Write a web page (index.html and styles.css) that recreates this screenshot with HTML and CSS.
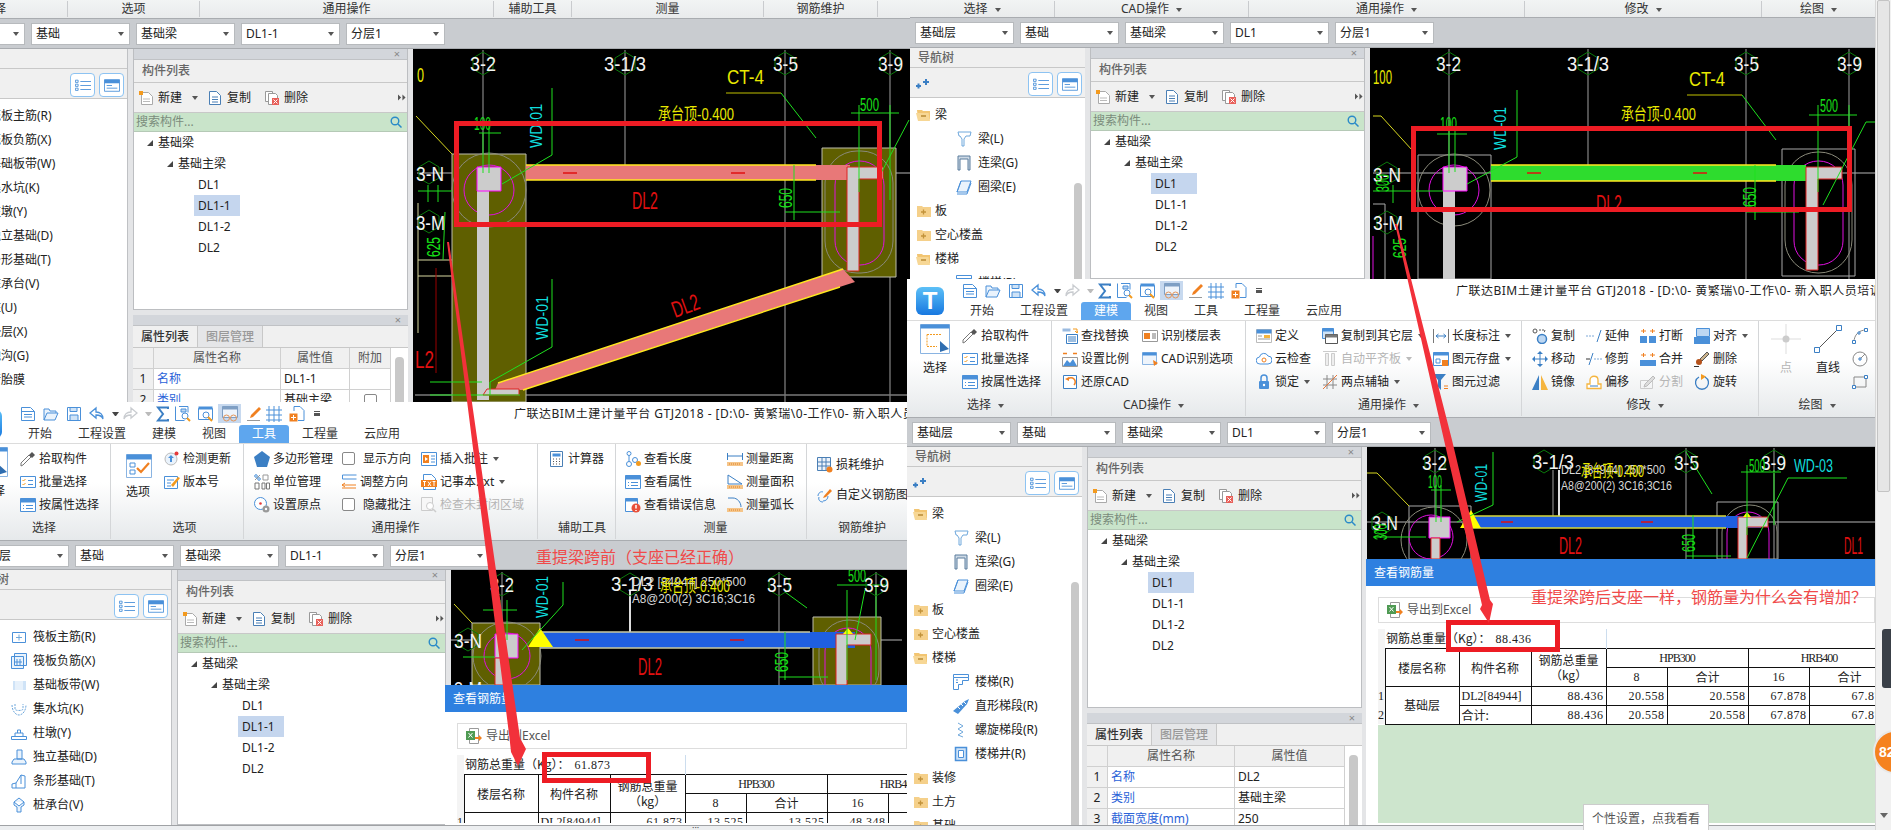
FILE: index.html
```html
<!DOCTYPE html>
<html lang="zh-CN">
<head>
<meta charset="utf-8">
<title>GTJ2018</title>
<link rel="stylesheet" href="styles.css">
</head>
<body>
<svg class="defs" width="0" height="0">
<defs>
<symbol id="new" viewBox="0 0 16 16"><path d="M1.5 1.500h9l4 4v9h-13z" fill="#fff" stroke="#4a90d9"/><path d="M1.500 5.500h13M4 8.500h8M4 11h8" stroke="#4a90d9" fill="none"/></symbol>
<symbol id="open" viewBox="0 0 16 16"><path d="M1 14V3h5l1 2h6v2M1 14l3-7h11l-3 7z" fill="#eaf3fc" stroke="#4a90d9"/></symbol>
<symbol id="save" viewBox="0 0 16 16"><path d="M1.500 1.500h13v13h-13z" fill="#fff" stroke="#4a90d9"/><path d="M4 1.500h7v4H4zM4 14V9h8v5" fill="#cfe3f7" stroke="#4a90d9"/></symbol>
<symbol id="undo" viewBox="0 0 16 16"><path d="M7 2L1 7l6 5V9c3 0 6 1 7 4 0-5-3-7-7-7z" fill="#fff" stroke="#4a90d9" stroke-width="1.300"/></symbol>
<symbol id="redo" viewBox="0 0 16 16"><path d="M9 2l6 5-6 5V9c-3 0-6 1-7 4 0-5 3-7 7-7z" fill="#fff" stroke="#c9ccd0" stroke-width="1.300"/></symbol>
<symbol id="sum" viewBox="0 0 16 16"><path d="M13 3V1.500H3L8 8l-5 6.500h10V13" fill="none" stroke="#3b7fc4" stroke-width="2"/></symbol>
<symbol id="q1" viewBox="0 0 16 16"><path d="M.5.500v14h9M4 .5h9v6" fill="none" stroke="#4a90d9"/><path d="M6 3h5v3H6z" fill="#bdd7f2" stroke="#4a90d9"/><circle cx="10" cy="10" r="3" fill="#fff" stroke="#4a90d9"/><path d="M12 12l3 3" stroke="#f39a1e" stroke-width="2"/></symbol>
<symbol id="q2" viewBox="0 0 16 16"><path d="M.5 2.500h14v11H.5z" fill="#fff" stroke="#4a90d9"/><path d="M.5.500h14v3H.5z" fill="#4a90d9"/><circle cx="8" cy="9" r="3" fill="#fff" stroke="#4a90d9"/><path d="M10 11l4 4" stroke="#f39a1e" stroke-width="2"/></symbol>
<symbol id="hl" viewBox="0 0 16 16"><path d="M.5.500h15v11H.5z" fill="#eef4fb" stroke="#7f9fc4"/><path d="M.5.500h15v3H.5z" fill="#7f9fc4"/><circle cx="4.500" cy="12" r="3" fill="none" stroke="#e2955a"/><circle cx="11.500" cy="12" r="3" fill="none" stroke="#e2955a"/></symbol>
<symbol id="pen" viewBox="0 0 16 16"><path d="M5 9l8-8 2 2-8 8-3 1z" fill="#f08020"/><path d="M1 14.500h13" stroke="#999"/></symbol>
<symbol id="gridi" viewBox="0 0 16 16"><path d="M0 4h16M0 9h16M0 14h16M3 0v16M8 0v16M13 0v16" stroke="#4a90d9" fill="none"/></symbol>
<symbol id="add" viewBox="0 0 16 16"><path d="M5 5V.5h6l4 4v10H9" fill="#fff" stroke="#4a90d9"/><path d="M.5 7.500h8v8h-8z" fill="#f08020"/><path d="M2 11.500h5M4.500 9v5" stroke="#fff"/></symbol>
<symbol id="pick" viewBox="0 0 16 16"><path d="M1 15l2-1 8-8-2-2-8 8z" fill="#fff" stroke="#777"/><path d="M9 4l3-3 3 3-3 3z" fill="#555"/></symbol>
<symbol id="batch" viewBox="0 0 16 16"><path d="M.5 2.500h15v11H.5z" fill="#fff" stroke="#4a90d9"/><path d="M2.500 6l1 1 2-2M2.500 10l1 1 2-2" stroke="#f39a1e" fill="none"/><path d="M8 6.500h5M8 10.500h5" stroke="#4a90d9"/></symbol>
<symbol id="attr" viewBox="0 0 16 16"><path d="M.5 1.500h15v13H.5z" fill="#fff" stroke="#4a90d9"/><path d="M.5 1.500h15v4H.5z" fill="#4a90d9"/><path d="M3 8.500h1M6 8.500h7M3 11.500h1M6 11.500h7" stroke="#4a90d9"/></symbol>
<symbol id="selbig" viewBox="0 0 30 30"><path d="M.5.500h29v29H.5z" fill="#fff" stroke="#8ab4e2"/><path d="M.5.500h29v4H.5z" fill="#4a90d9"/><path d="M7 10.500h14M7 10.500v12h10" fill="none" stroke="#f39a1e" stroke-dasharray="2 1"/><path d="M20 17l9 8-9 3z" fill="#2f6db0"/></symbol>
<symbol id="find" viewBox="0 0 16 16"><path d="M.5.500h8v3h-8z" fill="#9bbbe0"/><path d="M11 1h4v4M13 3l2 2 1-2" stroke="#f39a1e" fill="none"/><path d="M4.500 6.500h11v9h-11z" fill="#fff" stroke="#3b7fc4"/><path d="M6 9h8M6 11h8M6 13h8" stroke="#3b7fc4"/></symbol>
<symbol id="scale" viewBox="0 0 16 16"><path d="M.5 6.500h15v9H.5z" fill="#fff" stroke="#999"/><path d="M1 15l4-6 3 3 3-4 4 7z" fill="#4a90d9"/><path d="M1 2.500h4M11 2.500h4" stroke="#f08020" stroke-width="1.500"/></symbol>
<symbol id="restore" viewBox="0 0 16 16"><path d="M1.500 1.500h13v13h-13z" fill="#fff" stroke="#3b7fc4"/><path d="M12 11A4 4 0 1 0 6 5" fill="none" stroke="#f08020" stroke-width="1.500"/><path d="M3 5l4-2v4z" fill="#f08020"/></symbol>
<symbol id="floor" viewBox="0 0 16 16"><path d="M.5 2.500h15v11H.5z" fill="#fff" stroke="#999"/><path d="M2 5h6v6H2z" fill="#f08020"/><path d="M10 6h4M10 8h4M10 10h4" stroke="#777"/></symbol>
<symbol id="cadopt" viewBox="0 0 16 16"><path d="M.5 1.500h14v12H.5z" fill="#eef4fb" stroke="#8ab4e2"/><path d="M.5 1.500h14v3H.5z" fill="#4a90d9"/><path d="M11 9l5 3-4 3z" fill="#f08020"/></symbol>
<symbol id="def" viewBox="0 0 16 16"><path d="M.5 1.500h15v13H.5z" fill="#fff" stroke="#bbb"/><path d="M.5 1.500h15v4H.5z" fill="#4a90d9"/><path d="M8 7h6v3H8z" fill="#f5b53f"/><path d="M2 8h4M2 11h12" stroke="#999"/></symbol>
<symbol id="cloud" viewBox="0 0 16 16"><path d="M4 13a3.500 3.500 0 0 1-.5-7A4.500 4.500 0 0 1 12 5a3.500 3.500 0 0 1 0 8z" fill="#fff" stroke="#4a90d9"/><circle cx="8" cy="9" r="2" fill="none" stroke="#f08020"/></symbol>
<symbol id="lock" viewBox="0 0 16 16"><path d="M5 7V4a3 3 0 0 1 6 0v3" fill="none" stroke="#4a90d9" stroke-width="1.500"/><rect x="3" y="7" width="10" height="8" rx="1" fill="#4a90d9"/><circle cx="8" cy="11" r="1.200" fill="#fff"/></symbol>
<symbol id="copyto" viewBox="0 0 16 16"><path d="M.5.500h11v10H.5z" fill="#cfe3f7" stroke="#4a90d9"/><path d="M.5.500h11v3H.5z" fill="#4a90d9"/><path d="M3.500 6.500h12v9h-12z" fill="#fff" stroke="#555"/><path d="M3.500 6.500h12v3h-12z" fill="#777"/></symbol>
<symbol id="autoal" viewBox="0 0 16 16"><path d="M1 .5h14M3.500 2.500h3v12h-3zM9.500 2.500h3v12h-3z" fill="#eee" stroke="#ccc"/></symbol>
<symbol id="twopt" viewBox="0 0 16 16"><path d="M5 1v14M11 1v14M1 5h14M1 11h14" stroke="#888" fill="none"/><path d="M1 15L15 1" stroke="#e8763a"/></symbol>
<symbol id="lenm" viewBox="0 0 16 16"><path d="M.5 1v14M15.500 1v14" stroke="#777"/><path d="M3 8h10M3 8l2.500-2M3 8l2.500 2M13 8l-2.500-2M13 8l-2.500 2" stroke="#3b7fc4" fill="none"/></symbol>
<symbol id="save2" viewBox="0 0 16 16"><path d="M.5 1.500h15v13H.5z" fill="#fff" stroke="#4a90d9"/><path d="M.5 1.500h15v3H.5z" fill="#4a90d9"/><path d="M3 8h4v4H3z" fill="none" stroke="#4a90d9"/><path d="M9 9h6v6H9z" fill="#f08020"/></symbol>
<symbol id="filt" viewBox="0 0 16 16"><path d="M0 0h13L8 6v10L5 13V6z" fill="#3b7fc4"/><path d="M11 12h4M11 14.500h4" stroke="#f08020"/></symbol>
<symbol id="copy2" viewBox="0 0 16 16"><circle cx="3" cy="3" r="2" fill="#fff" stroke="#555"/><circle cx="10" cy="11" r="4.500" fill="#bdd7f2" stroke="#3b7fc4" stroke-width="1.500"/><path d="M7 2h6l-1 3" stroke="#555" fill="none" stroke-dasharray="2 1"/></symbol>
<symbol id="move" viewBox="0 0 16 16"><path d="M8 3v10M3 8h10" stroke="#3b7fc4"/><path d="M8 0l3 3H5zM8 16l3-3H5zM0 8l3-3v6zM16 8l-3-3v6z" fill="#3b7fc4"/></symbol>
<symbol id="mirror" viewBox="0 0 16 16"><path d="M7 1v15H0z" fill="#3b7fc4"/><path d="M9 1v15h7z" fill="#f5b53f"/></symbol>
<symbol id="ext" viewBox="0 0 16 16"><path d="M0 8h9" stroke="#7fa9d8" stroke-dasharray="2 1"/><path d="M11 14l4-12" stroke="#3b7fc4"/></symbol>
<symbol id="trim" viewBox="0 0 16 16"><path d="M0 8h4" stroke="#333"/><path d="M8 8h8" stroke="#7fa9d8" stroke-dasharray="2 1"/><path d="M3 14L7 2" stroke="#3b7fc4"/></symbol>
<symbol id="offs" viewBox="0 0 16 16"><path d="M1 14.500V10h3V6c0-5 8-5 8 0v4h3v4.500z" fill="#fff" stroke="#f5b53f" stroke-width="1.300"/><path d="M4 12h8" stroke="#3b7fc4"/></symbol>
<symbol id="brk" viewBox="0 0 16 16"><path d="M0 8h7v7H0zM9 8h7v7H9z" fill="#4a90d9"/><path d="M1 3h5M3.500 1v4M10 3h5M12.500 1v4" stroke="#f08020"/></symbol>
<symbol id="mrg" viewBox="0 0 16 16"><path d="M0 9h16v6H0z" fill="#4a90d9"/><path d="M1 4h5M3.500 2v4M10 4h5M12.500 2v4" stroke="#f08020"/></symbol>
<symbol id="splt" viewBox="0 0 16 16"><path d="M.5 6.500h12v8H.5z" fill="none" stroke="#ccc"/><path d="M5 10l8-8 2 2-8 8-3 1z" fill="#ddd" stroke="#bbb"/></symbol>
<symbol id="alg" viewBox="0 0 16 16"><path d="M2.500.5h13v8h-13z" fill="#bdd7f2" stroke="#4a90d9"/><path d="M0 9h16v7H0z" fill="#4a90d9"/></symbol>
<symbol id="era" viewBox="0 0 16 16"><path d="M6 8l7-7 2 2-7 7z" fill="#c9b18a" stroke="#555"/><circle cx="5" cy="11" r="3" fill="#b5521b"/><path d="M0 15.500h5" stroke="#333"/></symbol>
<symbol id="rot" viewBox="0 0 16 16"><path d="M11 3A6.500 6.500 0 1 1 5 3" fill="none" stroke="#3b7fc4" stroke-width="1.300"/><path d="M7 0l5 2.500L7 6z" fill="#f39a1e"/></symbol>
<symbol id="pt" viewBox="0 0 30 30"><path d="M15 0v30M0 15h30" stroke="#ddd"/><circle cx="15" cy="15" r="3.500" fill="#ccc"/></symbol>
<symbol id="ln" viewBox="0 0 30 30"><path d="M4 26L26 4" stroke="#555"/><path d="M1.500 23.500h5v5h-5zM23.500 1.500h5v5h-5z" fill="#fff" stroke="#3b7fc4"/></symbol>
<symbol id="arc" viewBox="0 0 16 16"><path d="M2 14C2 7 7 2 14 2" fill="none" stroke="#888"/><path d="M.5 12.500h3v3h-3zM12.500.500h3v3h-3zM6 4h2v2H6z" fill="#fff" stroke="#3b7fc4"/></symbol>
<symbol id="circ" viewBox="0 0 16 16"><circle cx="8" cy="8" r="7" fill="none" stroke="#888"/><path d="M7 7h2v2H7z" fill="#fff" stroke="#3b7fc4"/><path d="M9 7l4-4" stroke="#888"/></symbol>
<symbol id="rct" viewBox="0 0 16 16"><path d="M2 3h12v10H2z" fill="none" stroke="#888"/><path d="M.5 11.500h3v3h-3zM12.500 1.500h3v3h-3z" fill="#fff" stroke="#3b7fc4"/></symbol>
<symbol id="optbig" viewBox="0 0 26 24"><path d="M.5.500h25v23H.5z" fill="#fff" stroke="#8ab4e2"/><path d="M.5.500h25v5H.5z" fill="#4a90d9"/><path d="M4 9h5v4H4zM4 16h5v4H4z" fill="none" stroke="#4a90d9"/><path d="M11 14l4 4 8-9" stroke="#f08020" stroke-width="2.200" fill="none"/></symbol>
<symbol id="upd" viewBox="0 0 16 16"><circle cx="7" cy="8" r="6" fill="#eaf3fc" stroke="#bbb"/><path d="M7 4l3 3H8v4H6V7H4z" fill="#4a90d9"/><circle cx="12.500" cy="2.500" r="2" fill="#e63a3a"/></symbol>
<symbol id="ver" viewBox="0 0 16 16"><path d="M.5 2.500h13v12H.5z" fill="#fff" stroke="#4a90d9"/><path d="M3 6h7M3 9h4M3 12h4" stroke="#4a90d9"/><path d="M7 11l7-8 2 1-7 9z" fill="#f39a1e"/></symbol>
<symbol id="poly" viewBox="0 0 16 16"><path d="M8 0l8 6-3 10H3L0 6z" fill="#3b7fc4"/></symbol>
<symbol id="unit" viewBox="0 0 16 16"><path d="M1 6l5-5" stroke="#999"/><circle cx="2" cy="2" r="1.300" fill="none" stroke="#4a90d9"/><circle cx="5" cy="5" r="1.300" fill="none" stroke="#4a90d9"/><path d="M9 1h5v5H9z" fill="none" stroke="#999"/><path d="M1 9h4v6H1zM8 9h3v6H8zM12.500 9h3v6h-3z" fill="none" stroke="#777"/></symbol>
<symbol id="orig" viewBox="0 0 16 16"><circle cx="6.500" cy="6.500" r="6" fill="#fff" stroke="#4a90d9"/><circle cx="6.500" cy="6.500" r="1.300" fill="#e63a3a"/><circle cx="12" cy="12" r="3.500" fill="#999"/><circle cx="12" cy="12" r="1.200" fill="#fff"/></symbol>
<symbol id="dir" viewBox="0 0 16 16"><path d="M15.500 5H1.500V1h14" fill="none" stroke="#4a90d9"/><path d="M1 11h14M1 11l3-2M1 11l3 2M1 14h14" stroke="#f08020" fill="none"/></symbol>
<symbol id="note" viewBox="0 0 16 16"><path d="M.5 1.500h15v13H.5z" fill="#fff" stroke="#4a90d9"/><path d="M2 4h6v8H2z" fill="#f08020"/><path d="M4 6l3 2-3 2z" fill="#fff"/><path d="M10 5h4M10 8h4M10 11h4" stroke="#4a90d9"/></symbol>
<symbol id="txt" viewBox="0 0 16 16"><path d="M2.500.5h8l4 4v11h-12z" fill="#fff" stroke="#4a90d9"/><path d="M0 6h16v7H0z" fill="#f08020"/><path d="M2 7.500h3M3.500 7.500V12M7 7.500l3 4.500M10 7.500L7 12M11.500 7.500h3M13 7.500V12" stroke="#fff"/></symbol>
<symbol id="chk" viewBox="0 0 16 16"><path d="M.5.500h11v13H.5z" fill="#f7f7f7" stroke="#ccc"/><circle cx="9" cy="9" r="3.500" fill="#fff" stroke="#ccc"/><path d="M12 12l3 3" stroke="#ccc" stroke-width="1.500"/></symbol>
<symbol id="calc" viewBox="0 0 16 16"><path d="M1.500.5h12v15h-12z" fill="#fff" stroke="#4a7fb5"/><path d="M3.500 2.500h8v3h-8z" fill="#4a90d9"/><path d="M4 8h1M7 8h1M10 8h1M4 10.500h1M7 10.500h1M10 10.500h1M4 13h1M7 13h1M10 13h1" stroke="#555"/></symbol>
<symbol id="vlen" viewBox="0 0 16 16"><path d="M4 3v10" stroke="#4a90d9"/><circle cx="4" cy="2.500" r="2" fill="#fff" stroke="#4a90d9"/><circle cx="4" cy="13" r="2.500" fill="#fff" stroke="#4a90d9"/><circle cx="10" cy="9" r="2.500" fill="#fff" stroke="#4a90d9"/><circle cx="13.500" cy="12.500" r="2.500" fill="#f39a1e"/></symbol>
<symbol id="verr" viewBox="0 0 16 16"><path d="M.5 1.500h12v13H.5z" fill="#fff" stroke="#4a90d9"/><path d="M.5 1.500h12v3H.5z" fill="#4a90d9"/><circle cx="11" cy="11" r="4.500" fill="#e8503a"/><path d="M11 8v3.500M11 13v1" stroke="#fff" stroke-width="1.500"/></symbol>
<symbol id="mdis" viewBox="0 0 16 16"><path d="M.5 2v7M15.500 2v7M1 5h14" stroke="#3b7fc4"/><path d="M0 11h16v4H0z" fill="#f5c58a"/><path d="M2 13h12" stroke="#e08020" stroke-dasharray="1 1"/></symbol>
<symbol id="mare" viewBox="0 0 16 16"><path d="M1 1v9h14z" fill="#fff" stroke="#3b7fc4"/><path d="M0 11h16v4H0z" fill="#f5c58a"/><path d="M2 13h12" stroke="#e08020" stroke-dasharray="1 1"/></symbol>
<symbol id="marc" viewBox="0 0 16 16"><path d="M1 1h5c4 0 8 4 8 9" fill="none" stroke="#3b7fc4"/><path d="M0 11h16v4H0z" fill="#f5c58a"/><path d="M2 13h12" stroke="#e08020" stroke-dasharray="1 1"/></symbol>
<symbol id="loss" viewBox="0 0 16 16"><path d="M.5.500h13v13H.5zM.5 5h13M.5 9h13M5 .5v13M9 .5v13" fill="#eef4fb" stroke="#4a7fb5"/><circle cx="12.500" cy="12.500" r="3" fill="#f08020"/></symbol>
<symbol id="rebar" viewBox="0 0 16 16"><path d="M1 9c0-3 3-5 5-4M6 15c-3 0-5-2-4-5M11 9c0 3-2 5-5 5" fill="none" stroke="#4a90d9"/><path d="M7 9l6-7 2 2-6 6-3 1z" fill="#f08020"/></symbol>
<symbol id="lst" viewBox="0 0 18 14"><path d="M.5 1h3v2.500h-3zM.5 5.500h3V8h-3zM.5 10h3v2.500h-3z" fill="none" stroke="#4a90d9"/><path d="M6 2.500h12M6 7h12M6 11.500h12" stroke="#4a90d9"/></symbol>
<symbol id="crd" viewBox="0 0 18 14"><path d="M.5.500h17v13H.5z" fill="#fff" stroke="#4a90d9"/><path d="M.5.500h17v4H.5z" fill="#4a90d9"/><path d="M3 7h6M3 10h12" stroke="#4a90d9"/></symbol>
<symbol id="sr" viewBox="0 0 12 12"><circle cx="5" cy="5" r="3.800" fill="none" stroke="#2a8ac8" stroke-width="1.400"/><path d="M8 8l3.500 3.500" stroke="#2a8ac8" stroke-width="1.500"/></symbol>
<symbol id="mr" viewBox="0 0 9 7"><path d="M0 0l3.500 3.500L0 7zM5 0l3.500 3.500L5 7z" fill="#555"/></symbol>
<symbol id="star" viewBox="0 0 14 12"><path d="M0 8h5M2.500 5.500v5M7 4h6M10 1v6" stroke="#3b7fc4" stroke-width="2"/></symbol>
<symbol id="pnew" viewBox="0 0 14 14"><path d="M2.500 1.500h7l4 4v8h-11z" fill="#fff" stroke="#aaa"/><path d="M4 8h7M4 10.500h7" stroke="#bbb"/><path d="M0 0h4v4H0z" fill="#f39a1e"/></symbol>
<symbol id="pcopy" viewBox="0 0 14 14"><path d="M1.500.5h7l4 4v9h-11z" fill="#fff" stroke="#4a7fb5"/><path d="M4 6h6M4 8.500h6M4 11h6" stroke="#4a7fb5"/></symbol>
<symbol id="pdel" viewBox="0 0 14 14"><path d="M.5.500h7v10h-7z" fill="#fff" stroke="#999"/><path d="M3.500 2.500h7l2 2v9h-9z" fill="#fff" stroke="#999"/><path d="M7 7h7v7H7z" fill="#e8605a"/><path d="M8.500 8.500l4 4M12.500 8.500l-4 4" stroke="#fff"/></symbol>
<symbol id="fo" viewBox="0 0 16 12"><path d="M1 1h5l1 1h7v8.500H2z" fill="#f2c572"/><path d="M0 4h12.500l1.500 8H2z" fill="#f7d795"/><path d="M5 7h5" stroke="#b98a35" stroke-width="1.500"/></symbol>
<symbol id="fc" viewBox="0 0 16 12"><path d="M1 1h5l1 1h8v10H1z" fill="#f5d08a"/><path d="M5 7h5M7.500 4.500v5" stroke="#c2923a" stroke-width="1.300"/></symbol>
<symbol id="ni1" viewBox="0 0 16 16"><path d="M1.500 3.500h13v10h-13z" fill="none" stroke="#4a90d9"/><path d="M8 5.500v6M5 8.500h6" stroke="#6fa8dc"/></symbol>
<symbol id="ni2" viewBox="0 0 16 16"><path d="M3.500.5h12v12h-12zM.5 3.500h12v12H.5z" fill="#eaf3fc" stroke="#4a90d9"/><path d="M3 9h8M6 6v7M9 6v7" stroke="#4a90d9"/></symbol>
<symbol id="ni3" viewBox="0 0 16 16"><path d="M2 4h13v9H2z" fill="#cfe3f7"/><path d="M5 4v9M11 4v9M7 4v9M9 4v9" stroke="#fff"/></symbol>
<symbol id="ni4" viewBox="0 0 16 16"><path d="M1 4c0 5 3 10 7 10s7-5 7-10M4 3v5c0 2 8 2 8 0V3" fill="none" stroke="#6fa8dc" stroke-dasharray="2 1"/></symbol>
<symbol id="ni5" viewBox="0 0 16 16"><path d="M.5 11.500h15v3H.5zM4 11V8h8v3M6.500 8V5h3v3" fill="#fff" stroke="#4a90d9"/></symbol>
<symbol id="ni6" viewBox="0 0 16 16"><path d="M6 1h5v9H6zM3 10h10l2 3v2H1v-2z" fill="#eaf3fc" stroke="#4a90d9"/></symbol>
<symbol id="ni7" viewBox="0 0 16 16"><path d="M1 15v-4l4-1 5-8 4 1v12z" fill="#fff" stroke="#4a90d9"/><path d="M10 2v9M5 10v5" stroke="#4a90d9"/></symbol>
<symbol id="ni8" viewBox="0 0 16 16"><path d="M8 1l5 4-5 4-5-4zM3 5v3l3 2v5h4v-5l3-2V5" fill="#eaf3fc" stroke="#4a90d9"/></symbol>
<symbol id="ni9" viewBox="0 0 16 16"><path d="M2 1h13l-1 4h-4l-2 3v7H6V8L4 5H3z" fill="#fff" stroke="#6fa8dc"/></symbol>
<symbol id="ni10" viewBox="0 0 16 16"><path d="M2 15V1h12v14h-2V4H4v11z" fill="#cdd9e5" stroke="#5b7c9d"/></symbol>
<symbol id="ni11" viewBox="0 0 16 16"><path d="M5 2h10l-4 11H1zM5 2L1 13" fill="#eaf3fc" stroke="#4a90d9"/><path d="M1 15h10l4-11" fill="none" stroke="#4a90d9"/></symbol>
<symbol id="ni12" viewBox="0 0 16 16"><path d="M.5.500h15v3H.5zM.5 3.500v12h5v-5h4v-4h6V3.500" fill="#fff" stroke="#4a90d9"/><path d="M3 6h2M3 8.500h2" stroke="#4a90d9"/></symbol>
<symbol id="ni13" viewBox="0 0 16 16"><path d="M0 13L12 3l4-2-2 5-9 10z" fill="#4a90d9"/><path d="M5 9l2 2M8 6l2 2M11 4l2 2" stroke="#fff"/></symbol>
<symbol id="ni14" viewBox="0 0 16 16"><path d="M5 1l5 3-5 3 5 3-5 3 5 2" fill="none" stroke="#6fa8dc"/></symbol>
<symbol id="ni15" viewBox="0 0 16 16"><path d="M2.500 1.500h11v13h-11z" fill="#cfe3f7" stroke="#4a90d9" stroke-width="1.500"/><path d="M5.500 4.500h5v7h-5z" fill="#fff" stroke="#4a90d9"/></symbol>
<symbol id="xl" viewBox="0 0 16 16"><path d="M3.500.5h9v15h-9z" fill="#fff" stroke="#9a9a9a"/><path d="M0 3h9v9H0z" fill="#4f9a53"/><path d="M2.500 5l4 4.500M6.500 5l-4 4.500" stroke="#fff"/><path d="M9 9h4V7l3 3-3 3v-2H9z" fill="#f08020"/></symbol>
</defs>
</svg>

<!-- Top-left window -->
<section class="win win-a">
  <div class="labelbar labels-a">
    <span class="lb la1">选择</span><span class="lb la2">选项</span><span class="lb la3">通用操作</span><span class="lb la4">辅助工具</span><span class="lb la5">测量</span><span class="lb la6">钢筋维护</span>
  </div>
  <div class="toolbar toolbar-tall">
    <div class="combo"><span>基础层</span><i class="car"></i></div><div class="combo"><span>基础</span><i class="car"></i></div><div class="combo"><span>基础梁</span><i class="car"></i></div><div class="combo"><span>DL1-1</span><i class="car"></i></div><div class="combo"><span>分层1</span><i class="car"></i></div>
  </div>
  <div class="body">
    <aside class="nav nav-wide">
      <div class="nav-title">导航树</div>
      <div class="nav-btns"><span class="vbtn"><svg class="vi"><use href="#lst"/></svg></span><span class="vbtn"><svg class="vi"><use href="#crd"/></svg></span></div>
      <ul class="nav-tree">
        <li class="ni ni-sub"><svg class="ic"><use href="#ni1"/></svg>筏板主筋(R)</li>
        <li class="ni ni-sub"><svg class="ic"><use href="#ni2"/></svg>筏板负筋(X)</li>
        <li class="ni ni-sub"><svg class="ic"><use href="#ni3"/></svg>基础板带(W)</li>
        <li class="ni ni-sub"><svg class="ic"><use href="#ni4"/></svg>集水坑(K)</li>
        <li class="ni ni-sub"><svg class="ic"><use href="#ni5"/></svg>柱墩(Y)</li>
        <li class="ni ni-sub"><svg class="ic"><use href="#ni6"/></svg>独立基础(D)</li>
        <li class="ni ni-sub"><svg class="ic"><use href="#ni7"/></svg>条形基础(T)</li>
        <li class="ni ni-sub"><svg class="ic"><use href="#ni8"/></svg>桩承台(V)</li>
        <li class="ni ni-sub"><svg class="ic"><use href="#ni8"/></svg>桩(U)</li>
        <li class="ni ni-sub"><svg class="ic"><use href="#ni3"/></svg>垫层(X)</li>
        <li class="ni ni-sub"><svg class="ic"><use href="#ni4"/></svg>地沟(G)</li>
        <li class="ni ni-sub"><svg class="ic"><use href="#ni1"/></svg>砖胎膜</li>
      </ul>
    </aside>
    <div class="list">
      <div class="list-top">
        <div class="phead">×</div>
        <div class="ptitle">构件列表</div>
        <div class="ptool"><span class="pb pb-new"><svg class="pi"><use href="#pnew"/></svg>新建<i class="car car-s"></i></span><span class="pb pb-copy"><svg class="pi"><use href="#pcopy"/></svg>复制</span><span class="pb pb-del"><svg class="pi"><use href="#pdel"/></svg>删除</span><svg class="more"><use href="#mr"/></svg></div>
        <div class="psearch"><span>搜索构件...</span><svg class="si"><use href="#sr"/></svg></div>
        <ul class="ptree"><li class="t1">基础梁</li><li class="t2">基础主梁</li><li class="t3"><span>DL1</span></li><li class="t3"><span class="sel">DL1-1</span></li><li class="t3"><span>DL1-2</span></li><li class="t3"><span>DL2</span></li></ul>
      </div>
      <div class="prop">
        <div class="phead">×</div>
        <div class="ptabs"><span class="ptab on">属性列表</span><span class="ptab">图层管理</span></div>
        <div class="pgrid with-add">
          <span class="pth"></span><span class="pth">属性名称</span><span class="pth">属性值</span><span class="pth">附加</span><span class="pscroll"><b></b></span>
          <span class="pn">1</span><span class="pk">名称</span><span class="pv">DL1-1</span><span class="pv"></span>
          <span class="pn">2</span><span class="pk">类别</span><span class="pv">基础主梁</span><span class="pv pc"><i class="cb cb-s"></i></span>
        </div>
      </div>
    </div>
    <div class="cad">
      <svg class="draw" width="497" height="353" viewBox="413 49 497 353">
        <g class="gl"><path d="M483 50V400M625 50V173M785 50V402M890 50V402M417 173H910M415 395H910"/></g>
        <text class="y" x="417" y="82" lengthAdjust="spacingAndGlyphs" textLength="7">0</text>
        <path d="M416 116L452 154" class="yl"/><path d="M418 203V333M418 260H452M418 276H452" class="yl2"/>
        <path d="M436 268V373" stroke="#900" fill="none"/>
        <path d="M452 154h74v248h-74zM822 148h74v129h-74z" class="olive"/>
        <circle cx="489" cy="190" r="37" class="ring"/><rect x="825" y="151" width="68" height="122" rx="32" class="ring"/>
        <circle cx="489" cy="190" r="25" class="mag"/><rect x="835" y="161" width="49" height="104" rx="24" class="mag"/>
        <path d="M526 165H850V180H526z" fill="#e87878"/><path d="M526 165H816M526 180H816" class="yl3"/>
        <path d="M498 383L843 269L855 282L523 390H495z" fill="#e87878"/><path d="M498 383L843 269M523 390L840 287" class="yl3"/>
        <path d="M563 173H577M731 173H745" stroke="#e01010" stroke-width="1.500" fill="none"/>
        <path d="M477 167h12v233h-12z" fill="#ccc"/><path d="M477 167h24v24h-24z" fill="#ccc" stroke="#f0f"/>
        <path d="M483 395h36v-6h-32z" fill="#ccc" stroke="#d22"/>
        <path d="M847 167h36v12h-24v92h-12z" fill="#ccc" stroke="#d22"/>
        <g class="gn"><path d="M479 133H501M489 120V173M483 133V173M418 191H452M428 185V202M438 185V202M552 88V155L502 184M552 279V347L490 382M851 113H899M859 105V192M890 105V200M794 165V220M785 212H840M781 93L816 138M880 175L909 120M490 382V395M430 382H482M430 395H520M445 212L443 260"/></g>
        <path d="M726 93H781" stroke="#808000" stroke-width="1.500"/>
        <g class="hex"><path d="M483 52l10 6v11l-10 6-10-6V58zM625 52l10 6v11l-10 6-10-6V58zM785 52l10 6v11l-10 6-10-6V58zM890 52l10 6v11l-10 6-10-6V58zM429 161l10 6v11l-10 6-10-6v-11zM429 210l10 6v11l-10 6-10-6v-11z"/></g>
        <g class="w"><text x="470" y="71" lengthAdjust="spacingAndGlyphs" textLength="26">3-2</text><text x="604" y="71" lengthAdjust="spacingAndGlyphs" textLength="42">3-1/3</text><text x="773" y="71" lengthAdjust="spacingAndGlyphs" textLength="25">3-5</text><text x="878" y="71" lengthAdjust="spacingAndGlyphs" textLength="25">3-9</text><text x="416" y="181" lengthAdjust="spacingAndGlyphs" textLength="28">3-N</text><text x="416" y="230" lengthAdjust="spacingAndGlyphs" textLength="29">3-M</text></g>
        <text class="y" x="727" y="84" lengthAdjust="spacingAndGlyphs" textLength="37">CT-4</text>
        <text class="y ysm" x="658" y="120" lengthAdjust="spacingAndGlyphs" textLength="76">承台顶-0.400</text>
        <text class="g" x="860" y="111" lengthAdjust="spacingAndGlyphs" textLength="19">500</text><text class="g" x="474" y="130" lengthAdjust="spacingAndGlyphs" textLength="17">100</text>
        <text class="g" transform="translate(440 257) rotate(-90)" lengthAdjust="spacingAndGlyphs" textLength="20">625</text>
        <text class="g" transform="translate(792 208) rotate(-90)" lengthAdjust="spacingAndGlyphs" textLength="20">650</text>
        <text class="c" transform="translate(542 148) rotate(-90)" lengthAdjust="spacingAndGlyphs" textLength="44">WD-01</text>
        <text class="c" transform="translate(548 340) rotate(-90)" lengthAdjust="spacingAndGlyphs" textLength="44">WD-01</text>
        <text class="r" x="632" y="209" lengthAdjust="spacingAndGlyphs" textLength="26">DL2</text><text class="r" transform="translate(675 318) rotate(-20)" lengthAdjust="spacingAndGlyphs" textLength="28">DL2</text><text class="r" x="415" y="368" lengthAdjust="spacingAndGlyphs" textLength="19">L2</text>
      </svg>
    </div>
  </div>
</section>

<!-- Top-right window -->
<section class="win win-b">
  <div class="labelbar labels-b">
    <span class="lb lb1">选择 <i class="car"></i></span><span class="lb lb2">CAD操作 <i class="car"></i></span><span class="lb lb3">通用操作 <i class="car"></i></span><span class="lb lb4">修改 <i class="car"></i></span><span class="lb lb5">绘图 <i class="car"></i></span>
  </div>
  <div class="toolbar toolbar-tall">
    <div class="combo"><span>基础层</span><i class="car"></i></div><div class="combo"><span>基础</span><i class="car"></i></div><div class="combo"><span>基础梁</span><i class="car"></i></div><div class="combo"><span>DL1</span><i class="car"></i></div><div class="combo"><span>分层1</span><i class="car"></i></div>
  </div>
  <div class="body">
    <aside class="nav">
      <div class="nav-title">导航树</div>
      <div class="nav-btns nav-btns-star"><svg class="stari"><use href="#star"/></svg><span class="vbtn"><svg class="vi"><use href="#lst"/></svg></span><span class="vbtn"><svg class="vi"><use href="#crd"/></svg></span></div>
      <ul class="nav-tree">
        <li class="ni"><svg class="fd"><use href="#fo"/></svg>梁</li>
        <li class="ni ni-sub"><svg class="ic"><use href="#ni9"/></svg>梁(L)</li>
        <li class="ni ni-sub"><svg class="ic"><use href="#ni10"/></svg>连梁(G)</li>
        <li class="ni ni-sub"><svg class="ic"><use href="#ni11"/></svg>圈梁(E)</li>
        <li class="ni"><svg class="fd"><use href="#fc"/></svg>板</li>
        <li class="ni"><svg class="fd"><use href="#fc"/></svg>空心楼盖</li>
        <li class="ni"><svg class="fd"><use href="#fo"/></svg>楼梯</li>
        <li class="ni ni-sub"><svg class="ic"><use href="#ni12"/></svg>楼梯(R)</li>
      </ul>
      <span class="nav-thumb"></span>
    </aside>
    <div class="list">
      <div class="list-top">
        <div class="phead">×</div>
        <div class="ptitle">构件列表</div>
        <div class="ptool"><span class="pb pb-new"><svg class="pi"><use href="#pnew"/></svg>新建<i class="car car-s"></i></span><span class="pb pb-copy"><svg class="pi"><use href="#pcopy"/></svg>复制</span><span class="pb pb-del"><svg class="pi"><use href="#pdel"/></svg>删除</span><svg class="more"><use href="#mr"/></svg></div>
        <div class="psearch"><span>搜索构件...</span><svg class="si"><use href="#sr"/></svg></div>
        <ul class="ptree"><li class="t1">基础梁</li><li class="t2">基础主梁</li><li class="t3"><span class="sel">DL1</span></li><li class="t3"><span>DL1-1</span></li><li class="t3"><span>DL1-2</span></li><li class="t3"><span>DL2</span></li></ul>
      </div>
    </div>
    <div class="cad">
      <svg class="draw" width="506" height="232" viewBox="1369 48 506 232">
        <g class="gl"><path d="M1448 49V279M1587 49V173M1745 49V279M1848 49V279M1372 173H1875"/></g>
        <text class="y" x="1372" y="84" lengthAdjust="spacingAndGlyphs" textLength="19">100</text>
        <path d="M1372 116H1380L1411 150" class="yl"/><path d="M1372 204H1384V279" class="wl"/>
        <path d="M1372 236V279" stroke="#e010e0" fill="none"/>
        <path d="M1417 155h73v124h-73zM1781 149h73v127h-73z" class="box"/>
        <circle cx="1453" cy="190" r="36" class="ring"/><rect x="1784" y="152" width="67" height="121" rx="33" class="ring"/>
        <circle cx="1453" cy="190" r="25" class="mag"/><rect x="1793" y="161" width="49" height="104" rx="24" class="mag"/>
        <path d="M1490 165H1805V181H1490z" fill="#2edc2e"/><path d="M1490 165H1775M1490 181H1775" class="yl3"/>
        <path d="M1526 173H1540M1692 173H1706" stroke="#e01010" stroke-width="1.500" fill="none"/>
        <path d="M1442 167h12v112h-12z" fill="#ccc"/><path d="M1442 167h24v24h-24z" fill="#ccc" stroke="#f0f"/>
        <path d="M1805 167h36v12h-24v91h-12z" fill="#ccc" stroke="#d22"/>
        <g class="gn"><path d="M1436 134H1466M1448 120V173M1454 130V172M1372 191H1442M1392 185V203M1516 90V157L1466 184M1808 115H1856M1817 105V192M1848 105V200M1754 165V220M1745 212H1798M1741 95L1775 140M1822 205L1865 122H1875"/></g>
        <path d="M1686 95H1741" stroke="#808000" stroke-width="1.500"/>
        <g class="hex"><path d="M1448 52l10 6v11l-10 6-10-6V58zM1587 52l10 6v11l-10 6-10-6V58zM1745 52l10 6v11l-10 6-10-6V58zM1848 52l10 6v11l-10 6-10-6V58zM1386 162l10 6v11l-10 6-10-6v-11zM1386 211l10 6v11l-10 6-10-6v-11z"/></g>
        <g class="w"><text x="1435" y="71" lengthAdjust="spacingAndGlyphs" textLength="25">3-2</text><text x="1566" y="71" lengthAdjust="spacingAndGlyphs" textLength="42">3-1/3</text><text x="1733" y="71" lengthAdjust="spacingAndGlyphs" textLength="25">3-5</text><text x="1836" y="71" lengthAdjust="spacingAndGlyphs" textLength="25">3-9</text><text x="1372" y="182" lengthAdjust="spacingAndGlyphs" textLength="28">3-N</text><text x="1372" y="230" lengthAdjust="spacingAndGlyphs" textLength="30">3-M</text></g>
        <text class="y" x="1688" y="86" lengthAdjust="spacingAndGlyphs" textLength="36">CT-4</text>
        <text class="y ysm" x="1620" y="120" lengthAdjust="spacingAndGlyphs" textLength="75">承台顶-0.400</text>
        <text class="g" x="1819" y="112" lengthAdjust="spacingAndGlyphs" textLength="18">500</text><text class="g" x="1439" y="130" lengthAdjust="spacingAndGlyphs" textLength="17">100</text>
        <text class="g" transform="translate(1388 192) rotate(-90)" lengthAdjust="spacingAndGlyphs" textLength="18">300</text>
        <text class="g" transform="translate(1405 258) rotate(-90)" lengthAdjust="spacingAndGlyphs" textLength="20">625</text>
        <text class="g" transform="translate(1755 207) rotate(-90)" lengthAdjust="spacingAndGlyphs" textLength="20">650</text>
        <text class="c" transform="translate(1505 150) rotate(-90)" lengthAdjust="spacingAndGlyphs" textLength="43">WD-01</text>
        <text class="r" x="1595" y="212" lengthAdjust="spacingAndGlyphs" textLength="26">DL2</text>
      </svg>
    </div>
  </div>
</section>

<!-- Bottom-left window -->
<section class="win win-c">
  <header class="rhead">
    <div class="logo"><b>T</b></div>
    <div class="qat">
      <div class="qat-i"><svg class="q"><use href="#new"/></svg><svg class="q"><use href="#open"/></svg><svg class="q"><use href="#save"/></svg><svg class="q"><use href="#undo"/></svg><i class="car qc"></i><svg class="q"><use href="#redo"/></svg><i class="car qc off-c"></i><svg class="q q-n"><use href="#sum"/></svg><svg class="q"><use href="#q1"/></svg><svg class="q q-n"><use href="#q2"/></svg><span class="q-hl"><svg class="ic"><use href="#hl"/></svg></span><svg class="q q-n"><use href="#pen"/></svg><svg class="q"><use href="#gridi"/></svg><svg class="q"><use href="#add"/></svg><span class="q-more"></span></div>
      <div class="title">广联达BIM土建计量平台 GTJ2018 - [D:\0- 黄繁瑞\0-工作\0- 新入职人员培训</div>
    </div>
    <nav class="tabs"><span class="tab">开始</span><span class="tab">工程设置</span><span class="tab">建模</span><span class="tab">视图</span><span class="tab on">工具</span><span class="tab">工程量</span><span class="tab">云应用</span></nav>
  </header>
  <div class="ribbon">
    <div class="grp g-sel"><div class="rows"><div class="big"><svg class="bi"><use href="#selbig"/></svg><span>选择</span></div><div class="col"><div class="ri"><svg class="ic"><use href="#pick"/></svg>拾取构件</div><div class="ri"><svg class="ic"><use href="#batch"/></svg>批量选择</div><div class="ri"><svg class="ic"><use href="#attr"/></svg>按属性选择</div></div></div><div class="rlabel">选择</div></div>
    <div class="grp gc-opt"><div class="rows"><div class="big big-o"><svg class="bi-o"><use href="#optbig"/></svg><span>选项</span></div><div class="col"><div class="ri"><svg class="ic"><use href="#upd"/></svg>检测更新</div><div class="ri"><svg class="ic"><use href="#ver"/></svg>版本号</div></div></div><div class="rlabel">选项</div></div>
    <div class="grp gc-com"><div class="rows"><div class="col"><div class="ri"><svg class="ic"><use href="#poly"/></svg>多边形管理</div><div class="ri"><svg class="ic"><use href="#unit"/></svg>单位管理</div><div class="ri"><svg class="ic"><use href="#orig"/></svg>设置原点</div></div><div class="col"><div class="ri"><i class="cb"></i>显示方向</div><div class="ri"><svg class="ic"><use href="#dir"/></svg>调整方向</div><div class="ri"><i class="cb"></i>隐藏批注</div></div><div class="col"><div class="ri"><svg class="ic"><use href="#note"/></svg>插入批注 <i class="car"></i></div><div class="ri"><svg class="ic"><use href="#txt"/></svg>记事本.txt <i class="car"></i></div><div class="ri off"><svg class="ic"><use href="#chk"/></svg>检查未封闭区域</div></div></div><div class="rlabel">通用操作</div></div>
    <div class="grp gc-aux"><div class="rows"><div class="col"><div class="ri"><svg class="ic"><use href="#calc"/></svg>计算器</div></div></div><div class="rlabel">辅助工具</div></div>
    <div class="grp gc-mea"><div class="rows"><div class="col"><div class="ri"><svg class="ic"><use href="#vlen"/></svg>查看长度</div><div class="ri"><svg class="ic"><use href="#attr"/></svg>查看属性</div><div class="ri"><svg class="ic"><use href="#verr"/></svg>查看错误信息</div></div><div class="col"><div class="ri"><svg class="ic"><use href="#mdis"/></svg>测量距离</div><div class="ri"><svg class="ic"><use href="#mare"/></svg>测量面积</div><div class="ri"><svg class="ic"><use href="#marc"/></svg>测量弧长</div></div></div><div class="rlabel">测量</div></div>
    <div class="grp gc-reb"><div class="rows"><div class="col col-wide"><div class="ri"><svg class="ic"><use href="#loss"/></svg>损耗维护</div><div class="ri"><svg class="ic"><use href="#rebar"/></svg>自定义钢筋图</div></div></div><div class="rlabel">钢筋维护</div></div>
  </div>
  <div class="toolbar">
    <div class="combo"><span>基础层</span><i class="car"></i></div><div class="combo"><span>基础</span><i class="car"></i></div><div class="combo"><span>基础梁</span><i class="car"></i></div><div class="combo"><span>DL1-1</span><i class="car"></i></div><div class="combo"><span>分层1</span><i class="car"></i></div>
  </div>
  <div class="body">
    <aside class="nav nav-wide">
      <div class="nav-title">导航树</div>
      <div class="nav-btns"><span class="vbtn"><svg class="vi"><use href="#lst"/></svg></span><span class="vbtn"><svg class="vi"><use href="#crd"/></svg></span></div>
      <ul class="nav-tree">
        <li class="ni ni-sub"><svg class="ic"><use href="#ni1"/></svg>筏板主筋(R)</li>
        <li class="ni ni-sub"><svg class="ic"><use href="#ni2"/></svg>筏板负筋(X)</li>
        <li class="ni ni-sub"><svg class="ic"><use href="#ni3"/></svg>基础板带(W)</li>
        <li class="ni ni-sub"><svg class="ic"><use href="#ni4"/></svg>集水坑(K)</li>
        <li class="ni ni-sub"><svg class="ic"><use href="#ni5"/></svg>柱墩(Y)</li>
        <li class="ni ni-sub"><svg class="ic"><use href="#ni6"/></svg>独立基础(D)</li>
        <li class="ni ni-sub"><svg class="ic"><use href="#ni7"/></svg>条形基础(T)</li>
        <li class="ni ni-sub"><svg class="ic"><use href="#ni8"/></svg>桩承台(V)</li>
      </ul>
    </aside>
    <div class="list">
      <div class="list-top">
        <div class="phead">×</div>
        <div class="ptitle">构件列表</div>
        <div class="ptool"><span class="pb pb-new"><svg class="pi"><use href="#pnew"/></svg>新建<i class="car car-s"></i></span><span class="pb pb-copy"><svg class="pi"><use href="#pcopy"/></svg>复制</span><span class="pb pb-del"><svg class="pi"><use href="#pdel"/></svg>删除</span><svg class="more"><use href="#mr"/></svg></div>
        <div class="psearch"><span>搜索构件...</span><svg class="si"><use href="#sr"/></svg></div>
        <ul class="ptree"><li class="t1">基础梁</li><li class="t2">基础主梁</li><li class="t3"><span>DL1</span></li><li class="t3"><span class="sel">DL1-1</span></li><li class="t3"><span>DL1-2</span></li><li class="t3"><span>DL2</span></li></ul>
      </div>
    </div>
    <div class="cad">
      <svg class="draw" width="451" height="116" viewBox="456 570 451 116">
        <g class="gl"><path d="M507 572V640M635 590V640M784 572V685M881 572V685M456 640H907"/></g>
        <path d="M635 590V632" stroke="#ddd" stroke-width="2"/>
        <path d="M459 604L477 623" class="yl"/>
        <path d="M477 623h68v62h-68zM818 617h68v68h-68z" class="olive"/>
        <circle cx="512" cy="656" r="34" class="ring"/><rect x="824" y="620" width="60" height="80" rx="30" class="ring"/>
        <circle cx="512" cy="656" r="23" class="mag"/><rect x="830" y="628" width="46" height="80" rx="23" class="mag"/>
        <path d="M545 632H860V648H545z" fill="#1f5fe0"/><path d="M545 632H815M545 648H815" stroke="#c9c9a0" stroke-width="1.500"/>
        <path d="M580 640H594M735 640H749" stroke="#e01010" stroke-width="1.500" fill="none"/>
        <path d="M500 634h23v24h-23z" fill="#ccc" stroke="#f0f"/><path d="M500 658h11v27h-11z" fill="#ccc" stroke="#d22"/>
        <path d="M841 634h35v11h-24v40h-11z" fill="#ccc" stroke="#d22"/>
        <path d="M545 628L558 647H533z" fill="#ff0"/><path d="M853 628l5 6h-10z" fill="#ff0"/>
        <g class="gn"><path d="M488 610H522M505 600V640M512 600V640M468 657H500M568 582V605L527 650M852 590V680M842 585H890M881 585V680M870 590L860 640M790 632V680M784 677H833M790 592L812 608"/></g>
        <g class="hex"><path d="M507 573l10 6v11l-10 6-10-6v-11zM635 573l10 6v11l-10 6-10-6v-11zM784 573l10 6v11l-10 6-10-6v-11zM881 573l10 6v11l-10 6-10-6v-11zM473 628l10 6v11l-10 6-10-6v-11z"/></g>
        <g class="w"><text x="495" y="592" lengthAdjust="spacingAndGlyphs" textLength="24">3-2</text><text x="616" y="591" lengthAdjust="spacingAndGlyphs" textLength="42">3-1/3</text><text x="772" y="592" lengthAdjust="spacingAndGlyphs" textLength="25">3-5</text><text x="869" y="592" lengthAdjust="spacingAndGlyphs" textLength="25">3-9</text><text x="459" y="648" lengthAdjust="spacingAndGlyphs" textLength="28">3-N</text><text x="459" y="696" lengthAdjust="spacingAndGlyphs" textLength="28">3-M</text></g>
        <text class="wsm" x="637" y="586" lengthAdjust="spacingAndGlyphs" textLength="114">DL2 [84944] 250*500</text>
        <text class="y ysm" x="665" y="592" lengthAdjust="spacingAndGlyphs" textLength="70">承台顶-0.400</text>
        <text class="wsm" x="637" y="603" lengthAdjust="spacingAndGlyphs" textLength="123">A8@200(2) 3C16;3C16</text>
        <text class="g" x="853" y="582" lengthAdjust="spacingAndGlyphs" textLength="18">500</text>
        <text class="g" transform="translate(793 672) rotate(-90)" lengthAdjust="spacingAndGlyphs" textLength="20">650</text>
        <text class="c" transform="translate(553 618) rotate(-90)" lengthAdjust="spacingAndGlyphs" textLength="42">WD-01</text>
        <text class="r" x="643" y="675" lengthAdjust="spacingAndGlyphs" textLength="24">DL2</text>
      </svg>
    </div>
  </div>
  <div class="dlg dlg-c">
    <div class="dlg-title">查看钢筋量</div>
    <div class="dlg-body">
      <div class="export"><span class="exbtn"><svg class="ic"><use href="#xl"/></svg>导出到Excel</span></div>
      <div class="sheet">
        <table class="rtable">
          <colgroup><col class="c0"><col class="c1"><col class="c2"><col class="c3"><col class="c4"><col class="c5"><col class="c6"><col class="c7"></colgroup>
          <tr><td class="rn"></td><td colspan="3" class="tot"><span class="zh">钢筋总重量（Kg）：</span><span class="val">61.873</span></td><td colspan="4" class="totr"></td></tr>
          <tr><td class="rn"></td><th rowspan="2">楼层名称</th><th rowspan="2">构件名称</th><th rowspan="2">钢筋总重量<br>（kg）</th><th colspan="2" class="latin">HPB300</th><th colspan="2" class="latin">HRB400</th></tr>
          <tr><td class="rn"></td><th class="num-h">8</th><th>合计</th><th class="num-h">16</th><th>合计</th></tr>
          <tr><td class="rn">1</td><td rowspan="2" class="ctr zh">基础层</td><td>DL2[84944]</td><td class="num">61.873</td><td class="num">13.525</td><td class="num">13.525</td><td class="num">48.348</td><td class="num">48.348</td></tr>
          <tr><td class="rn">2</td><td class="zh">合计:</td><td class="num">61.873</td><td class="num">13.525</td><td class="num">13.525</td><td class="num">48.348</td><td class="num">48.348</td></tr>
        </table>
      </div>
    </div>
  </div>
</section>

<!-- Bottom-right window -->
<section class="win win-d">
  <header class="rhead">
    <div class="logo"><b>T</b></div>
    <div class="qat">
      <div class="qat-i"><svg class="q"><use href="#new"/></svg><svg class="q"><use href="#open"/></svg><svg class="q"><use href="#save"/></svg><svg class="q"><use href="#undo"/></svg><i class="car qc"></i><svg class="q"><use href="#redo"/></svg><i class="car qc off-c"></i><svg class="q q-n"><use href="#sum"/></svg><svg class="q"><use href="#q1"/></svg><svg class="q q-n"><use href="#q2"/></svg><span class="q-hl"><svg class="ic"><use href="#hl"/></svg></span><svg class="q q-n"><use href="#pen"/></svg><svg class="q"><use href="#gridi"/></svg><svg class="q"><use href="#add"/></svg><span class="q-more"></span></div>
      <div class="title">广联达BIM土建计量平台 GTJ2018 - [D:\0- 黄繁瑞\0-工作\0- 新入职人员培训</div>
    </div>
    <nav class="tabs"><span class="tab">开始</span><span class="tab">工程设置</span><span class="tab on">建模</span><span class="tab">视图</span><span class="tab">工具</span><span class="tab">工程量</span><span class="tab">云应用</span></nav>
  </header>
  <div class="ribbon">
    <div class="grp g-sel g-sel-d"><div class="rows"><div class="big"><svg class="bi"><use href="#selbig"/></svg><span>选择</span></div><div class="col"><div class="ri"><svg class="ic"><use href="#pick"/></svg>拾取构件</div><div class="ri"><svg class="ic"><use href="#batch"/></svg>批量选择</div><div class="ri"><svg class="ic"><use href="#attr"/></svg>按属性选择</div></div></div><div class="rlabel">选择 <i class="car"></i></div></div>
    <div class="grp gd-cad"><div class="rows"><div class="col"><div class="ri"><svg class="ic"><use href="#find"/></svg>查找替换</div><div class="ri"><svg class="ic"><use href="#scale"/></svg>设置比例</div><div class="ri"><svg class="ic"><use href="#restore"/></svg>还原CAD</div></div><div class="col"><div class="ri"><svg class="ic"><use href="#floor"/></svg>识别楼层表</div><div class="ri"><svg class="ic"><use href="#cadopt"/></svg>CAD识别选项</div></div></div><div class="rlabel">CAD操作 <i class="car"></i></div></div>
    <div class="grp gd-com"><div class="rows"><div class="col"><div class="ri"><svg class="ic"><use href="#def"/></svg>定义</div><div class="ri"><svg class="ic"><use href="#cloud"/></svg>云检查</div><div class="ri"><svg class="ic"><use href="#lock"/></svg>锁定 <i class="car"></i></div></div><div class="col"><div class="ri"><svg class="ic"><use href="#copyto"/></svg>复制到其它层 <i class="car"></i></div><div class="ri off"><svg class="ic"><use href="#autoal"/></svg>自动平齐板 <i class="car car-off"></i></div><div class="ri"><svg class="ic"><use href="#twopt"/></svg>两点辅轴 <i class="car"></i></div></div><div class="col"><div class="ri"><svg class="ic"><use href="#lenm"/></svg>长度标注 <i class="car"></i></div><div class="ri"><svg class="ic"><use href="#save2"/></svg>图元存盘 <i class="car"></i></div><div class="ri"><svg class="ic"><use href="#filt"/></svg>图元过滤</div></div></div><div class="rlabel">通用操作 <i class="car"></i></div></div>
    <div class="grp gd-mod"><div class="rows"><div class="col"><div class="ri"><svg class="ic"><use href="#copy2"/></svg>复制</div><div class="ri"><svg class="ic"><use href="#move"/></svg>移动</div><div class="ri"><svg class="ic"><use href="#mirror"/></svg>镜像</div></div><div class="col"><div class="ri"><svg class="ic"><use href="#ext"/></svg>延伸</div><div class="ri"><svg class="ic"><use href="#trim"/></svg>修剪</div><div class="ri"><svg class="ic"><use href="#offs"/></svg>偏移</div></div><div class="col"><div class="ri"><svg class="ic"><use href="#brk"/></svg>打断</div><div class="ri"><svg class="ic"><use href="#mrg"/></svg>合并</div><div class="ri off"><svg class="ic"><use href="#splt"/></svg>分割</div></div><div class="col"><div class="ri"><svg class="ic"><use href="#alg"/></svg>对齐 <i class="car"></i></div><div class="ri"><svg class="ic"><use href="#era"/></svg>删除</div><div class="ri"><svg class="ic"><use href="#rot"/></svg>旋转</div></div></div><div class="rlabel">修改 <i class="car"></i></div></div>
    <div class="grp gd-drw"><div class="rows"><div class="big off"><svg class="bi"><use href="#pt"/></svg><span>点</span></div><div class="big"><svg class="bi"><use href="#ln"/></svg><span>直线</span></div><div class="col"><div class="ri"><svg class="ic"><use href="#arc"/></svg></div><div class="ri"><svg class="ic"><use href="#circ"/></svg></div><div class="ri"><svg class="ic"><use href="#rct"/></svg></div></div></div><div class="rlabel">绘图 <i class="car"></i></div></div>
  </div>
  <div class="toolbar">
    <div class="combo"><span>基础层</span><i class="car"></i></div><div class="combo"><span>基础</span><i class="car"></i></div><div class="combo"><span>基础梁</span><i class="car"></i></div><div class="combo"><span>DL1</span><i class="car"></i></div><div class="combo"><span>分层1</span><i class="car"></i></div>
  </div>
  <div class="body">
    <aside class="nav">
      <div class="nav-title">导航树</div>
      <div class="nav-btns nav-btns-star"><svg class="stari"><use href="#star"/></svg><span class="vbtn"><svg class="vi"><use href="#lst"/></svg></span><span class="vbtn"><svg class="vi"><use href="#crd"/></svg></span></div>
      <ul class="nav-tree">
        <li class="ni"><svg class="fd"><use href="#fo"/></svg>梁</li>
        <li class="ni ni-sub"><svg class="ic"><use href="#ni9"/></svg>梁(L)</li>
        <li class="ni ni-sub"><svg class="ic"><use href="#ni10"/></svg>连梁(G)</li>
        <li class="ni ni-sub"><svg class="ic"><use href="#ni11"/></svg>圈梁(E)</li>
        <li class="ni"><svg class="fd"><use href="#fc"/></svg>板</li>
        <li class="ni"><svg class="fd"><use href="#fc"/></svg>空心楼盖</li>
        <li class="ni"><svg class="fd"><use href="#fo"/></svg>楼梯</li>
        <li class="ni ni-sub"><svg class="ic"><use href="#ni12"/></svg>楼梯(R)</li>
        <li class="ni ni-sub"><svg class="ic"><use href="#ni13"/></svg>直形梯段(R)</li>
        <li class="ni ni-sub"><svg class="ic"><use href="#ni14"/></svg>螺旋梯段(R)</li>
        <li class="ni ni-sub"><svg class="ic"><use href="#ni15"/></svg>楼梯井(R)</li>
        <li class="ni"><svg class="fd"><use href="#fc"/></svg>装修</li>
        <li class="ni"><svg class="fd"><use href="#fc"/></svg>土方</li>
        <li class="ni"><svg class="fd"><use href="#fc"/></svg>基础</li>
      </ul>
      <span class="nav-thumb"></span>
    </aside>
    <div class="list">
      <div class="list-top">
        <div class="phead">×</div>
        <div class="ptitle">构件列表</div>
        <div class="ptool"><span class="pb pb-new"><svg class="pi"><use href="#pnew"/></svg>新建<i class="car car-s"></i></span><span class="pb pb-copy"><svg class="pi"><use href="#pcopy"/></svg>复制</span><span class="pb pb-del"><svg class="pi"><use href="#pdel"/></svg>删除</span><svg class="more"><use href="#mr"/></svg></div>
        <div class="psearch"><span>搜索构件...</span><svg class="si"><use href="#sr"/></svg></div>
        <ul class="ptree"><li class="t1">基础梁</li><li class="t2">基础主梁</li><li class="t3"><span class="sel">DL1</span></li><li class="t3"><span>DL1-1</span></li><li class="t3"><span>DL1-2</span></li><li class="t3"><span>DL2</span></li></ul>
      </div>
      <div class="prop">
        <div class="phead">×</div>
        <div class="ptabs"><span class="ptab on">属性列表</span><span class="ptab">图层管理</span></div>
        <div class="pgrid">
          <span class="pth"></span><span class="pth">属性名称</span><span class="pth">属性值</span><span class="pscroll"><b></b></span>
          <span class="pn">1</span><span class="pk">名称</span><span class="pv">DL2</span>
          <span class="pn">2</span><span class="pk">类别</span><span class="pv">基础主梁</span>
          <span class="pn">3</span><span class="pk">截面宽度(mm)</span><span class="pv">250</span>
        </div>
      </div>
    </div>
    <div class="cad">
      <svg class="draw" width="509" height="113" viewBox="1366 447 509 113">
        <g class="gl"><path d="M1434 448V522M1552 470V522M1685 448V559M1773 448V559M1366 522H1875"/></g>
        <path d="M1558 470V516" stroke="#ddd" stroke-width="2"/>
        <path d="M1366 473H1376L1408 506" class="yl"/>
        <path d="M1408 506h62v53h-62zM1716 502h61v57h-61z" class="box"/>
        <circle cx="1433" cy="540" r="33" class="ring"/><rect x="1721" y="505" width="55" height="90" rx="27" class="ring"/>
        <circle cx="1430" cy="537" r="22" class="mag"/><rect x="1726" y="512" width="42" height="80" rx="21" class="mag"/>
        <path d="M1470 516H1760V528H1470z" fill="#1f5fe0"/><path d="M1470 516H1725M1470 528H1725" stroke="#d8d838" stroke-width="1.500"/>
        <path d="M1500 522H1512M1640 522H1652" stroke="#e01010" stroke-width="1.500" fill="none"/>
        <path d="M1428 517h21v21h-21z" fill="#ccc" stroke="#f0f"/><path d="M1430 538h9v21h-9z" fill="#ccc" stroke="#d22"/>
        <path d="M1737 517h30v10h-21v32h-9z" fill="#ccc" stroke="#d22"/>
        <path d="M1470 510L1480 528H1459z" fill="#ff0"/><path d="M1746 512l4 5h-8z" fill="#ff0"/>
        <g class="gn"><path d="M1430 490H1450M1435 485V522M1440 485V522M1372 537H1425M1492 452V505L1456 522M1740 472H1780M1746 465V535M1773 470V525M1787 478L1746 558M1787 478H1846M1692 515V565M1685 556H1730M1685 452L1711 494"/></g>
        <g class="hex"><path d="M1434 450l10 6v11l-10 6-10-6v-11zM1543 450l10 6v11l-10 6-10-6v-11zM1685 450l10 6v11l-10 6-10-6v-11zM1773 450l10 6v11l-10 6-10-6v-11zM1381 512l10 6v11l-10 6-10-6v-11z"/></g>
        <g class="w"><text x="1421" y="470" lengthAdjust="spacingAndGlyphs" textLength="25">3-2</text><text x="1531" y="469" lengthAdjust="spacingAndGlyphs" textLength="42">3-1/3</text><text x="1673" y="470" lengthAdjust="spacingAndGlyphs" textLength="25">3-5</text><text x="1760" y="470" lengthAdjust="spacingAndGlyphs" textLength="25">3-9</text><text x="1371" y="530" lengthAdjust="spacingAndGlyphs" textLength="26">3-N</text></g>
        <text class="wsm" x="1560" y="474" lengthAdjust="spacingAndGlyphs" textLength="104">DL2 [84944] 250*500</text>
        <text class="y ysm" x="1580" y="477" lengthAdjust="spacingAndGlyphs" textLength="63">承台顶-0.400</text>
        <text class="wsm" x="1560" y="490" lengthAdjust="spacingAndGlyphs" textLength="111">A8@200(2) 3C16;3C16</text>
        <text class="g" x="1748" y="472" lengthAdjust="spacingAndGlyphs" textLength="16">500</text><text class="g" x="1427" y="488" lengthAdjust="spacingAndGlyphs" textLength="14">100</text>
        <text class="g" transform="translate(1386 540) rotate(-90)" lengthAdjust="spacingAndGlyphs" textLength="16">300</text>
        <text class="g" transform="translate(1694 552) rotate(-90)" lengthAdjust="spacingAndGlyphs" textLength="18">650</text>
        <text class="c" transform="translate(1486 502) rotate(-90)" lengthAdjust="spacingAndGlyphs" textLength="38">WD-01</text>
        <text class="cl" x="1793" y="472" lengthAdjust="spacingAndGlyphs" textLength="39">WD-03</text>
        <text class="r" x="1558" y="554" lengthAdjust="spacingAndGlyphs" textLength="23">DL2</text><text class="r" x="1843" y="554" lengthAdjust="spacingAndGlyphs" textLength="19">DL1</text>
      </svg>
    </div>
  </div>
  <div class="dlg dlg-d">
    <div class="dlg-title">查看钢筋量</div>
    <div class="dlg-body">
      <div class="export"><span class="exbtn"><svg class="ic"><use href="#xl"/></svg>导出到Excel</span></div>
      <div class="sheet">
        <table class="rtable">
          <colgroup><col class="c0"><col class="c1"><col class="c2"><col class="c3"><col class="c4"><col class="c5"><col class="c6"><col class="c7"></colgroup>
          <tr><td class="rn"></td><td colspan="3" class="tot"><span class="zh">钢筋总重量（Kg）：</span><span class="val">88.436</span></td><td colspan="4" class="totr"></td></tr>
          <tr><td class="rn"></td><th rowspan="2">楼层名称</th><th rowspan="2">构件名称</th><th rowspan="2">钢筋总重量<br>（kg）</th><th colspan="2" class="latin">HPB300</th><th colspan="2" class="latin">HRB400</th></tr>
          <tr><td class="rn"></td><th class="num-h">8</th><th>合计</th><th class="num-h">16</th><th>合计</th></tr>
          <tr><td class="rn">1</td><td rowspan="2" class="ctr zh">基础层</td><td>DL2[84944]</td><td class="num">88.436</td><td class="num">20.558</td><td class="num">20.558</td><td class="num">67.878</td><td class="num">67.878</td></tr>
          <tr><td class="rn">2</td><td class="zh">合计:</td><td class="num">88.436</td><td class="num">20.558</td><td class="num">20.558</td><td class="num">67.878</td><td class="num">67.878</td></tr>
        </table>
      </div>
    </div>
  </div>
</section>

<div class="statusbar"><span class="grip">···</span></div>
<div class="rail"><span class="rail-thumb"></span><span class="rail-down"></span></div>
<div class="slider"></div>
<div class="badge">82</div>
<div class="tooltip">个性设置，点我看看</div>

<svg class="annot" width="1891" height="830" viewBox="0 0 1891 830">
  <g class="redbox">
    <rect x="456.500" y="123.500" width="423" height="101"/>
    <rect x="1413.500" y="128.500" width="436" height="81"/>
    <rect x="544.500" y="754.500" width="104" height="26"/>
    <rect x="1448.500" y="622.500" width="109" height="27"/>
  </g>
  <path class="redarrow" d="M447 242L449 242L520 738L526 749L518 766L511 752L509.500 738Z"/>
  <path class="redarrow" d="M1395 224L1397 224L1452 440L1490 600L1493 604L1489 623L1480 609L1482 605L1444 440Z"/>
</svg>
<div class="note note-a">重提梁跨前（支座已经正确）</div>
<div class="note note-b">重提梁跨后支座一样，钢筋量为什么会有增加？</div>
</body>
</html>
```

FILE: styles.css
```css
*{box-sizing:border-box}
html,body{margin:0;padding:0}
body{position:relative;width:1891px;height:830px;overflow:hidden;background:#eef0f2;color:#222;font:12px/1 "Noto Sans","Noto Sans CJK SC",sans-serif}
ul{list-style:none;margin:0;padding:0}
.defs{position:absolute}
.win{position:absolute;overflow:hidden;display:flex;flex-direction:column;background:#e8e9eb}
.win-a{left:-79px;top:0;width:989px;height:402px}
.win-b{left:910px;top:0;width:965px;height:279px}
.win-c{left:-35px;top:402px;width:942px;height:423px}
.win-d{left:907px;top:279px;width:968px;height:546px}

/* label strips */
.labelbar{position:relative;flex:none;background:linear-gradient(#f2f4f4,#e9ebec);border-bottom:1px solid #a9acb0}
.labels-a{height:19px}
.labels-b{height:18px}
.lb{position:absolute;top:1px;height:16px;line-height:15px;text-align:center;border-right:1px solid #c9cbce;font-size:12px;color:#333}
.lb .car,.rlabel .car{margin-left:4px}
.la1{left:0;width:147px}.la2{left:147px;width:132px}.la3{left:279px;width:294px}.la4{left:573px;width:78px}.la5{left:651px;width:192px}.la6{left:843px;width:114px}
.lb1{left:0;width:145px}.lb2{left:145px;width:194px}.lb3{left:339px;width:276px}.lb4{left:615px;width:237px}.lb5{left:852px;width:113px;border-right:0}

/* combo strip */
.toolbar{flex:none;height:29px;padding:4px 5px 0;display:flex;gap:6px;background:#c9ccd0;border-bottom:1px solid #a9acb0}
.toolbar-tall{height:30px}
.combo{flex:none;width:99px;height:22px;padding:0 5px 0 4px;display:flex;align-items:center;justify-content:space-between;background:#fff;border:1px solid #b7babd;font-size:12px}
.car{display:inline-block;width:0;height:0;border-style:solid;border-width:4px 3.500px 0;border-color:#555 transparent transparent;vertical-align:middle}
.ri .car{margin-left:5px}
.car-s{margin-left:10px}
.car-off{border-top-color:#bbb}

/* body */
.body{flex:1;min-height:0;display:flex;gap:5px;background:#e4e5e7}
.nav{position:relative;flex:none;width:175px;background:#fff;overflow:hidden}
.nav-wide{width:207px;border-right:1px solid #bfc1c4}
.nav-title{height:20px;line-height:20px;padding-left:8px;background:#f0f0f0;border-bottom:1px solid #c8c8c8;color:#666;font-weight:500}
.nav-btns{height:30px;padding:4px 3px 0 0;display:flex;justify-content:flex-end;gap:4px;background:#f0f0f0;border-bottom:1px solid #c8c8c8}
.nav-btns-star{align-items:flex-start}
.stari{width:14px;height:12px;margin:6px auto 0 6px}
.vbtn{width:25px;height:24px;display:flex;align-items:center;justify-content:center;background:#fff;border:1px solid #8dc3f2;border-radius:4px}
.vi{width:16px;height:13px}
.nav-tree{padding-top:5px}
.ni{height:24px;padding-left:6px;display:flex;align-items:center;white-space:nowrap}
.ni-sub{padding-left:46px}
.ni .ic{margin-right:6px}
.fd{width:16px;height:12px;margin-right:3px}
.nav-thumb{position:absolute;right:3px;top:135px;bottom:0;width:8px;background:#c8c8c8;border-radius:4px 4px 0 0}

/* component list */
.list{flex:none;width:275px;display:flex;flex-direction:column;gap:5px}
.list-top{height:261px;display:flex;flex-direction:column;background:#fff;border:solid #bcbec1;border-width:0 1px 1px}
.win-c .list-top,.win-b .list-top{flex:1}
.win-c .list{width:269px}
.phead{flex:none;height:11px;background:#d3d6db;border-bottom:1px solid #c0c2c5;text-align:right;padding-right:7px;font-size:11px;line-height:10px;color:#888}
.ptitle{flex:none;height:23px;line-height:22px;padding-left:8px;background:#f0f0f0;border-bottom:1px solid #c8c8c8;color:#666;font-weight:500}
.ptool{flex:none;position:relative;height:30px;padding-left:5px;display:flex;align-items:center;background:#f0f0f0;border-bottom:1px solid #c8c8c8}
.pb{display:flex;align-items:center}
.pi{width:14px;height:14px;margin-right:5px}
.pb-new{width:69px}
.pb-copy{width:57px}
.more{position:absolute;right:1px;top:11px;width:8px;height:7px}
.psearch{flex:none;height:19px;padding:0 5px 0 2px;display:flex;align-items:center;justify-content:space-between;background:#c9e4ca;border-bottom:1px solid #b5c9b6;color:#7b8c7c}
.si{width:12px;height:12px}
.ptree{flex:1;padding-top:0}
.ptree li{height:21px;display:flex;align-items:center;position:relative}
.t1{padding-left:24px}
.t2{padding-left:44px}
.t3{padding-left:60px}
.t1::before,.t2::before{content:"";position:absolute;width:0;height:0;border-style:solid;border-width:0 0 6px 6px;border-color:transparent transparent #444;margin-left:-11px}
.t3 span{height:21px;line-height:21px;width:46px;padding-left:4px}
.sel{background:#c5d6ee}

/* property list */
.prop{flex:1;min-height:0;display:flex;flex-direction:column;background:#fff;overflow:hidden}
.ptabs{flex:none;height:22px;display:flex;background:#f0f0f0;border-bottom:1px solid #c8c8c8}
.ptab{width:65px;line-height:21px;text-align:center;color:#999;background:#e5e6e8;border-right:1px solid #c8c8c8;font-weight:500}
.ptab.on{background:#f0f0f0;color:#333}
.pgrid{position:relative;display:grid;grid-template-columns:21px 127px 110px;grid-auto-rows:21px}
.with-add{grid-template-columns:21px 127px 69px 41px}
.pth{background:#f0f0f0;border:solid #d0d0d0;border-width:0 1px 1px 0;text-align:center;line-height:20px;color:#555}
.pn,.pk,.pv{border:solid #d0d0d0;border-width:0 1px 1px 0;line-height:20px;padding-left:3px;white-space:nowrap;overflow:hidden}
.pn{background:#f0f0f0;text-align:center;padding:0}
.pk{color:#2a62d8}
.pc{text-align:center;padding:3px 0 0}
.pscroll{position:absolute;left:258px;top:0;width:17px;bottom:-200px;background:#fff}
.pscroll b{position:absolute;left:4px;right:4px;top:9px;bottom:0;background:#c8c8c8;border-radius:4px 4px 0 0}
.cb{flex:none;display:inline-block;width:13px;height:13px;margin:0 8px 0 1px;background:#fff;border:1px solid #888;border-radius:2px}
.cb-s{margin:0}

/* cad canvas */
.cad{flex:1;min-width:0;background:#000;overflow:hidden}
.draw{display:block;font-family:"Liberation Sans","Noto Sans CJK SC",sans-serif}
.gl path{stroke:#7a7a7a;stroke-width:1.300;fill:none}
.gn path{stroke:#1fe01f;fill:none}
.hex path{stroke:#0b7a0b;fill:none}
.ring{fill:none;stroke:#8a8a7a}
.mag{fill:none;stroke:#e010e0}
.olive{fill:#5f5f00;stroke:#bdbdad}
.box{fill:none;stroke:#a8a8a8}
.yl{stroke:#d8d820;fill:none}
.yl2{stroke:#d8d8a0;fill:none}
.yl3{stroke:#ffe820;fill:none;stroke-width:1.400}
.wl{stroke:#aaa;fill:none}
.w text{fill:#f4f4f4;font-size:21px}
.y{fill:#e8e800;font-size:21px}
.ysm{font-size:17px}
.g{fill:#18e018;font-size:18px}
.c{fill:#10dede;font-size:17px}
.cl{fill:#10dede;font-size:19px}
.r{fill:#e01010;font-size:23px}
.wsm{fill:#d8d8d8;font-size:12px}

/* ribbon */
.rhead{position:relative;flex:none;height:42px;background:#fff;border-bottom:1px solid #dcdcdc}
.logo{position:absolute;left:9px;top:8px;width:28px;height:28px;border-radius:6px;background:linear-gradient(#5cc0f7,#1878e0);color:#fff;text-align:center;font:700 24px/28px "Liberation Sans",sans-serif}
.qat{height:23px;display:flex;align-items:center}
.qat-i{flex:none;width:549px;padding-left:55px;display:flex;align-items:center}
.q{flex:none;width:16px;height:16px;margin-right:7px}
.q-n{margin-right:4px}
.qc{margin:0 3px 0 0;width:7px;border-top-color:#444;flex:none}
.off-c{border-top-color:#bbb}
.q-hl{flex:none;width:23px;height:19px;margin-right:5px;display:flex;align-items:center;justify-content:center;background:#c7d9ef}
.q-more{flex:none;width:6px;height:5px;margin-left:2px;border-top:1px solid #555;border-bottom:3px solid #555}
.title{flex:1;white-space:nowrap;overflow:hidden;color:#222;letter-spacing:.5px}
.tabs{position:absolute;left:50px;bottom:0;height:18px;display:flex}
.tab{padding:0 13px;line-height:18px;color:#333}
.tab.on{background:#5ea6ee;color:#fff;border-radius:3px 3px 0 0}
.ribbon{flex:none;height:97px;display:flex;background:linear-gradient(#fff 40%,#e6e9eb);border-bottom:1px solid #a9acb0}
.grp{flex:none;height:95px;display:flex;flex-direction:column;border-right:1px solid #d4d6d8;padding-top:3px}
.rows{height:69px;display:flex;flex:none}
.rlabel{margin-top:3px;height:18px;line-height:18px;text-align:center;color:#333}
.col{display:flex;flex-direction:column;flex:none}
.ri{height:23px;display:flex;align-items:center;white-space:nowrap}
.ri .ic{margin-right:3px}
.ic{flex:none;width:16px;height:16px}
.off{color:#b5b5b5}
.big{flex:none;display:flex;flex-direction:column;align-items:center;gap:8px;white-space:nowrap}
.bi{width:30px;height:30px}
.bi-o{width:26px;height:24px;margin-top:7px}
.big-o{gap:8px}

/* group widths on the modelling ribbon */
.g-sel{width:146px;padding-left:13px}
.g-sel-d{width:145px}
.g-sel .big{width:42px;align-items:flex-start}
.g-sel .big span{padding-left:3px}
.gd-cad{width:194px;padding-left:10px}
.gd-cad .col:first-child{width:80px}
.gd-com{width:276px;padding-left:10px}
.gd-com .col:nth-child(1){width:66px}
.gd-com .col:nth-child(2){width:111px}
.gd-mod{width:237px;padding-left:10px}
.gd-mod .col{width:54px}
.gd-drw{width:116px;border-right:0;padding-left:0}
.gd-drw .big{width:30px}
.gd-drw .big:first-child{width:54px}
.gd-drw .col{padding-left:9px}

/* group widths on the tools ribbon */
.gc-opt{width:133px;padding-left:15px}
.gc-opt .big{width:38px;align-items:flex-start}
.gc-com{width:294px;padding-left:10px}
.gc-com .col:nth-child(1){width:87px}
.gc-com .col:nth-child(2){width:80px}
.gc-aux{width:78px;padding-left:11px}
.gc-mea{width:191px;padding-left:9px}
.gc-mea .col:first-child{width:102px}
.gc-reb{width:100px;padding-left:10px;border-right:0}
.col-wide{padding-top:6px;gap:7px}

/* steel quantity dialog */
.dlg{position:absolute;display:flex;flex-direction:column;background:#f0f0f0}
.dlg-c{left:480px;top:283px;width:462px;height:140px}
.dlg-d{left:459px;top:280px;width:509px;height:266px}
.dlg-title{flex:none;height:27px;line-height:27px;padding-left:8px;background:#2e80e0;color:#fff}
.dlg-body{flex:1;min-height:0;padding:11px 0 0 12px;display:flex;flex-direction:column;gap:6px;overflow:hidden;background:#fff}
.export{flex:none;height:26px;padding:2px;background:#fff;border:1px solid #ddd}
.exbtn{display:inline-flex;align-items:center;height:20px;padding:0 8px 0 6px;gap:4px;color:#555}
.sheet{flex:1;min-height:0;overflow:hidden;background:#cde5cd;margin-bottom:2px}
.rtable{table-layout:fixed;width:512px;border-collapse:collapse;background:#fff;font:12px/1 "Liberation Serif",serif;color:#222}
.rtable td,.rtable th{height:19px;padding:0 2px;border:1px solid #111;overflow:hidden;white-space:nowrap;font-weight:400}
.rtable th{font:12px/15px "Noto Sans CJK SC",sans-serif;text-align:center}
.rtable th.latin{font:12px/1 "Liberation Serif",serif;letter-spacing:-1px}
.rtable th.num-h{font:12px/1 "Liberation Serif",serif}
.rtable td.rn{border:0;padding:0;font-size:12px;background:#f4f4f4}
.rtable td.tot{border:0 solid #111;border-right:1px solid #cde;padding-left:1px}
.rtable td.totr{border:0}
.zh{font:12px/1 "Noto Sans CJK SC",sans-serif}
.val{padding-left:5px;letter-spacing:.5px}
.ctr{text-align:center}
.num{text-align:right;letter-spacing:.5px}
.c0{width:7px}.c1{width:74px}.c2{width:72px}.c3{width:75px}.c4{width:61px}.c5{width:81px}.c6{width:61px}.c7{width:81px}

/* page chrome */
.statusbar{position:absolute;left:0;top:825px;width:1875px;height:5px;background:#eceef0;border-top:1px solid #a0a2a5;text-align:center}
.grip{position:absolute;left:692px;top:-3px;font-size:9px;color:#555}
.rail{position:absolute;left:1875px;top:0;width:16px;height:830px;background:#f1f1f1;border-left:1px solid #d8d8d8}
.rail-thumb{position:absolute;left:1px;right:1px;top:0;height:492px;background:#e6e6e6;border:1px solid #c4c4c4;border-radius:2px}
.rail-down{position:absolute;left:4px;top:813px;width:0;height:0;border-style:solid;border-width:5px 4px 0;border-color:#666 transparent transparent}
.slider{position:absolute;left:1882px;top:629px;width:9px;height:59px;background:#3a4048;border-radius:3px 0 0 3px}
.badge{position:absolute;left:1873px;top:730px;width:44px;height:44px;border-radius:50%;background:#f5821f;border:2px solid #e8e8e8;color:#fff;font:700 14px/40px "Liberation Sans",sans-serif;padding-left:4px}
.tooltip{position:absolute;left:1583px;top:804px;width:126px;height:26px;line-height:28px;text-align:center;background:#fff;border:1px solid #ccc;border-bottom:0;color:#555}
.annot{position:absolute;left:0;top:0;pointer-events:none}
.redbox rect{fill:none;stroke:#ed1c24;stroke-width:5}
.redarrow{fill:#f2313a}
.note{position:absolute;height:20px;line-height:20px;font-size:16px;color:#f04a4a;white-space:nowrap}
.note-a{left:536px;top:547px}
.note-b{left:1531px;top:587px}
```
